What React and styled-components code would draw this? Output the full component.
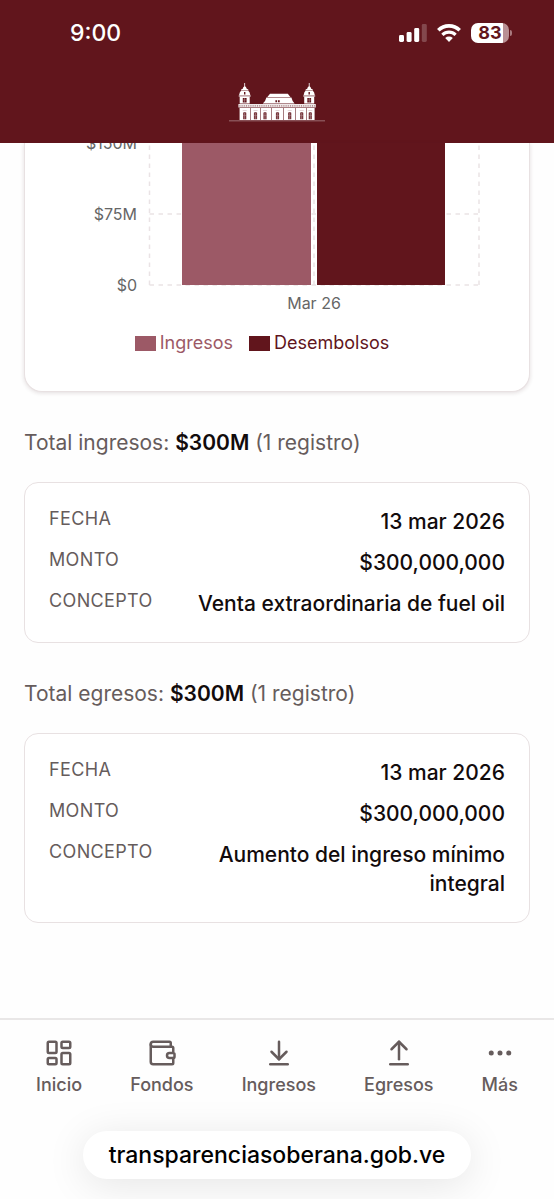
import React from 'react';
import styled, { createGlobalStyle } from 'styled-components';
import {
  LayoutDashboard,
  Wallet,
  ArrowDownToLine,
  ArrowUpFromLine,
  Ellipsis,
} from 'lucide-react';

const wine = '#61151c';
const rose = '#9c5966';
const muted = '#665c5c';
const line = '#e8e1e2';

const GlobalStyle = createGlobalStyle`
  * {
    box-sizing: border-box;
  }
  body {
    margin: 0;
    background: #fefefe;
    color: #120b0c;
    font-family: Inter, 'Liberation Sans', sans-serif;
  }
`

const Page = styled.div`
  min-height: 100vh;
  display: flex;
  flex-direction: column;
`

const Header = styled.header`
  background: ${wine};
  color: #fff;
  display: flex;
  flex-direction: column;
  align-items: center;
  gap: 17px;
  padding-bottom: 20px;
`

const StatusBar = styled.div`
  width: 100%;
  height: 66px;
  display: flex;
  align-items: center;
  justify-content: space-between;
  padding: 0 42px 0 70px;
`

const Time = styled.time`
  font-size: 23px;
  line-height: 28px;
  font-weight: 500;
`

const StatusIcons = styled.div`
  display: flex;
  align-items: center;
  gap: 10px;
`

const Battery = styled.div`
  display: flex;
  align-items: center;
  gap: 1px;

  &::after {
    content: '';
    width: 2px;
    height: 6px;
    border-radius: 0 2px 2px 0;
    background: #a9797e;
  }
`

const Charge = styled.div`
  width: 38px;
  height: 20px;
  border-radius: 7px;
  background: linear-gradient(to right, #fff 83%, #b88f94 83%);
  color: ${wine};
  font-size: 18px;
  line-height: 20px;
  font-weight: 700;
  text-align: center;
`

const HomeLink = styled.a`
  display: block;
  height: 40px;
`

const Main = styled.main`
  flex: 1;
  padding: 0 24px 36px;
`

const ChartCard = styled.section`
  border: 1px solid ${line};
  border-top: none;
  border-radius: 0 0 18px 18px;
  background: #fff;
  box-shadow: 0 1px 4px rgba(60, 20, 25, 0.14);
  padding-bottom: 36px;
`

const Plot = styled.svg`
  display: block;
  width: 100%;
  height: auto;
  font-size: 16px;
  fill: #666;
`

const Legend = styled.ul`
  list-style: none;
  margin: 0;
  padding: 0 30px 0 0;
  display: flex;
  justify-content: center;
  gap: 16px;
`

const LegendItem = styled.li`
  display: flex;
  align-items: center;
  gap: 4px;
  font-size: 18px;
  line-height: 24px;
  color: ${props => props.$color};

  &::before {
    content: '';
    width: 21px;
    height: 15px;
    background: ${props => props.$color};
  }
`

const Total = styled.p`
  margin: 36px 0 24px;
  font-size: 21px;
  line-height: 30px;
  color: ${muted};

  strong {
    font-weight: 600;
    color: #120b0c;
  }
`

const RecordCard = styled.dl`
  margin: 0;
  padding: 24px;
  border: 1px solid ${line};
  border-radius: 14px;
  background: #fff;
  display: flex;
  flex-direction: column;
  gap: 12px;
`

const Row = styled.div`
  display: flex;
  align-items: flex-start;
  justify-content: space-between;
  gap: 24px;
`

const Label = styled.dt`
  font-size: 18px;
  line-height: 23px;
  text-transform: uppercase;
  letter-spacing: 0.02em;
  color: ${muted};
`

const Value = styled.dd`
  margin: 0;
  max-width: 320px;
  font-size: 21px;
  line-height: 29px;
  font-weight: 500;
  text-align: right;
`

const TabBar = styled.nav`
  border-top: 2px solid #e9e7e7;
  display: flex;
  justify-content: space-around;
  padding: 18px 12px 24px;
`

const Tab = styled.a`
  display: flex;
  flex-direction: column;
  align-items: center;
  gap: 5px;
  color: ${muted};
  font-size: 18px;
  line-height: 24px;
  font-weight: 500;
  text-decoration: none;
`

const AddressBar = styled.footer`
  display: flex;
  justify-content: center;
  padding: 10px 24px 20px;
`

const Address = styled.a`
  padding: 10px 26px 9px;
  border-radius: 24px;
  background: #fff;
  box-shadow: 0 6px 40px rgba(0, 0, 0, 0.1);
  color: #000;
  font-size: 23px;
  line-height: 29px;
  font-weight: 500;
  text-decoration: none;
`

const Signal = () => (
  <svg width="28" height="18" viewBox="0 0 28 18" fill="#fff" aria-hidden="true">
    <rect x="0" y="11" width="5" height="7" rx="1.4" />
    <rect x="7.6" y="8" width="5" height="10" rx="1.4" />
    <rect x="15.2" y="4" width="5" height="14" rx="1.4" />
    <rect x="22.8" y="0" width="5" height="18" rx="1.4" opacity="0.22" />
  </svg>
)

const Wifi = () => (
  <svg width="24" height="18" viewBox="0 0 24 18" fill="none" aria-hidden="true">
    <path d="M1.3 6.3a15.2 15.2 0 0 1 21.4 0" stroke="#fff" strokeWidth="3.6" />
    <path d="M5.4 10.8a9.4 9.4 0 0 1 13.2 0" stroke="#fff" strokeWidth="3.2" />
    <path d="M12 18l-3.8-3.9a5.6 5.6 0 0 1 7.6 0z" fill="#fff" />
  </svg>
)

const doors = [15.7, 26.5, 36, 48.5, 60.7, 72.7, 81.3]
const joints = [21, 31.2, 42, 54.2, 66.2, 77]

const Tower = ({ x }) => (
  <g transform={`translate(${x} 0)`}>
    <path d="M-.4 0h.8v4h-.8z" />
    <path d="M-2 5.8Q-1.6 3.6 0 3.2 1.6 3.6 2 5.8L3.6 6.4v1h-7.2v-1z" />
    <path d="M-3.4 7.6h6.8Q5.2 9 5.6 12.2H-5.6Q-5.2 9-3.4 7.6z" />
    <path d="M-6 12.4H6v1.2H-6zM-5 13.8H5v6.8H-5z" />
    <path d="M-.7 9h1.4v2.4H-.7zM-1.9 15h3.8v4.4h-3.8z" fill={wine} />
    <path d="M-.3 15h.6v4.4h-.6zM-1.9 16.8h3.8v.5h-3.8z" opacity="0.5" />
    <path d="M-3.2 7.2h6.4v.4h-6.4z" fill={wine} opacity="0.6" />
  </g>
)

const Palace = () => (
  <svg width="96" height="40" viewBox="0 0 96 40" fill="#fff" aria-hidden="true">
    <Tower x={15.7} />
    <Tower x={80.2} />
    <path d="M41 10.8h17.8l2.6 3.2h-23z" />
    <path d="M37.4 14.6h25q.8 3.8 3.2 5.8H33.8q2.8-2 3.6-5.8z" />
    <path d="M46.4 17.2h1.7v2h-1.7zM49 17.2h1.7v2H49z" fill={wine} />
    <path d="M9.4 21h77.4v3.4H9.4z" opacity="0.9" />
    <path d="M10.4 22.8h75.6" stroke={wine} strokeWidth="1.2" strokeDasharray="1 1.2" opacity="0.55" />
    <path d="M10.6 25h75v12.1h-75z" />
    {joints.map(x => (
      <path key={x} d={`M${x} 25h.8v12.1h-.8z`} fill={wine} opacity="0.7" />
    ))}
    {doors.map(x => (
      <g key={x} transform={`translate(${x} 0)`}>
        <path d="M-1.6 29.8Q0 28 1.6 29.8v6.4h-3.2z" fill={wine} opacity="0.85" />
        <path d="M-.3 29.6h.6v6.6h-.6zM-1.6 32.4h3.2v.5h-3.2z" opacity="0.4" />
        <path d="M-2 27h4v.5h-4z" fill={wine} opacity="0.35" />
      </g>
    ))}
    <path d="M0 37.4h96v.8H0z" opacity="0.5" />
  </svg>
)

const BarChart = () => (
  <Plot viewBox="0 0 504 188" role="img" aria-label="Ingresos y desembolsos, Mar 26">
    <g stroke="#eae3e5" strokeWidth="1.5" strokeDasharray="4.5 4.5" fill="none">
      <path d="M124.5 142V0M289 142V0M454 142V0" />
      <path d="M124.5 71H454M124.5 142H454" />
    </g>
    <rect x="157" y="0" width="129" height="142" fill={rose} />
    <rect x="292" y="0" width="128" height="142" fill={wine} />
    <g textAnchor="end">
      <text x="112" y="6">$150M</text>
      <text x="112" y="77">$75M</text>
      <text x="112" y="148">$0</text>
    </g>
    <text x="289" y="166" textAnchor="middle">Mar 26</text>
  </Plot>
)

const Records = ({ title, total, rows }) => (
  <section>
    <Total>
      {title}: <strong>{total}</strong> (1 registro)
    </Total>
    <RecordCard>
      {rows.map(([label, value]) => (
        <Row key={label}>
          <Label>{label}</Label>
          <Value>{value}</Value>
        </Row>
      ))}
    </RecordCard>
  </section>
)

const income = [
  ['Fecha', '13 mar 2026'],
  ['Monto', '$300,000,000'],
  ['Concepto', 'Venta extraordinaria de fuel oil'],
]

const expenses = [
  ['Fecha', '13 mar 2026'],
  ['Monto', '$300,000,000'],
  ['Concepto', 'Aumento del ingreso mínimo integral'],
]

const tabs = [
  { label: 'Inicio', Icon: LayoutDashboard },
  { label: 'Fondos', Icon: Wallet },
  { label: 'Ingresos', Icon: ArrowDownToLine },
  { label: 'Egresos', Icon: ArrowUpFromLine },
  { label: 'Más', Icon: Ellipsis },
]

const App = () => {
  return (
    <Page>
      <GlobalStyle />

      <Header>
        <StatusBar>
          <Time>9:00</Time>
          <StatusIcons>
            <Signal />
            <Wifi />
            <Battery>
              <Charge>83</Charge>
            </Battery>
          </StatusIcons>
        </StatusBar>
        <HomeLink href="#inicio" aria-label="Inicio">
          <Palace />
        </HomeLink>
      </Header>

      <Main>
        <ChartCard>
          <BarChart />
          <Legend>
            <LegendItem $color={rose}>Ingresos</LegendItem>
            <LegendItem $color={wine}>Desembolsos</LegendItem>
          </Legend>
        </ChartCard>

        <Records title="Total ingresos" total="$300M" rows={income} />
        <Records title="Total egresos" total="$300M" rows={expenses} />
      </Main>

      <TabBar>
        {tabs.map(({ label, Icon }) => (
          <Tab key={label} href={`#${label.toLowerCase()}`}>
            <Icon size={30} />
            {label}
          </Tab>
        ))}
      </TabBar>

      <AddressBar>
        <Address href="#inicio">transparenciasoberana.gob.ve</Address>
      </AddressBar>
    </Page>
  )
}

export default App;
